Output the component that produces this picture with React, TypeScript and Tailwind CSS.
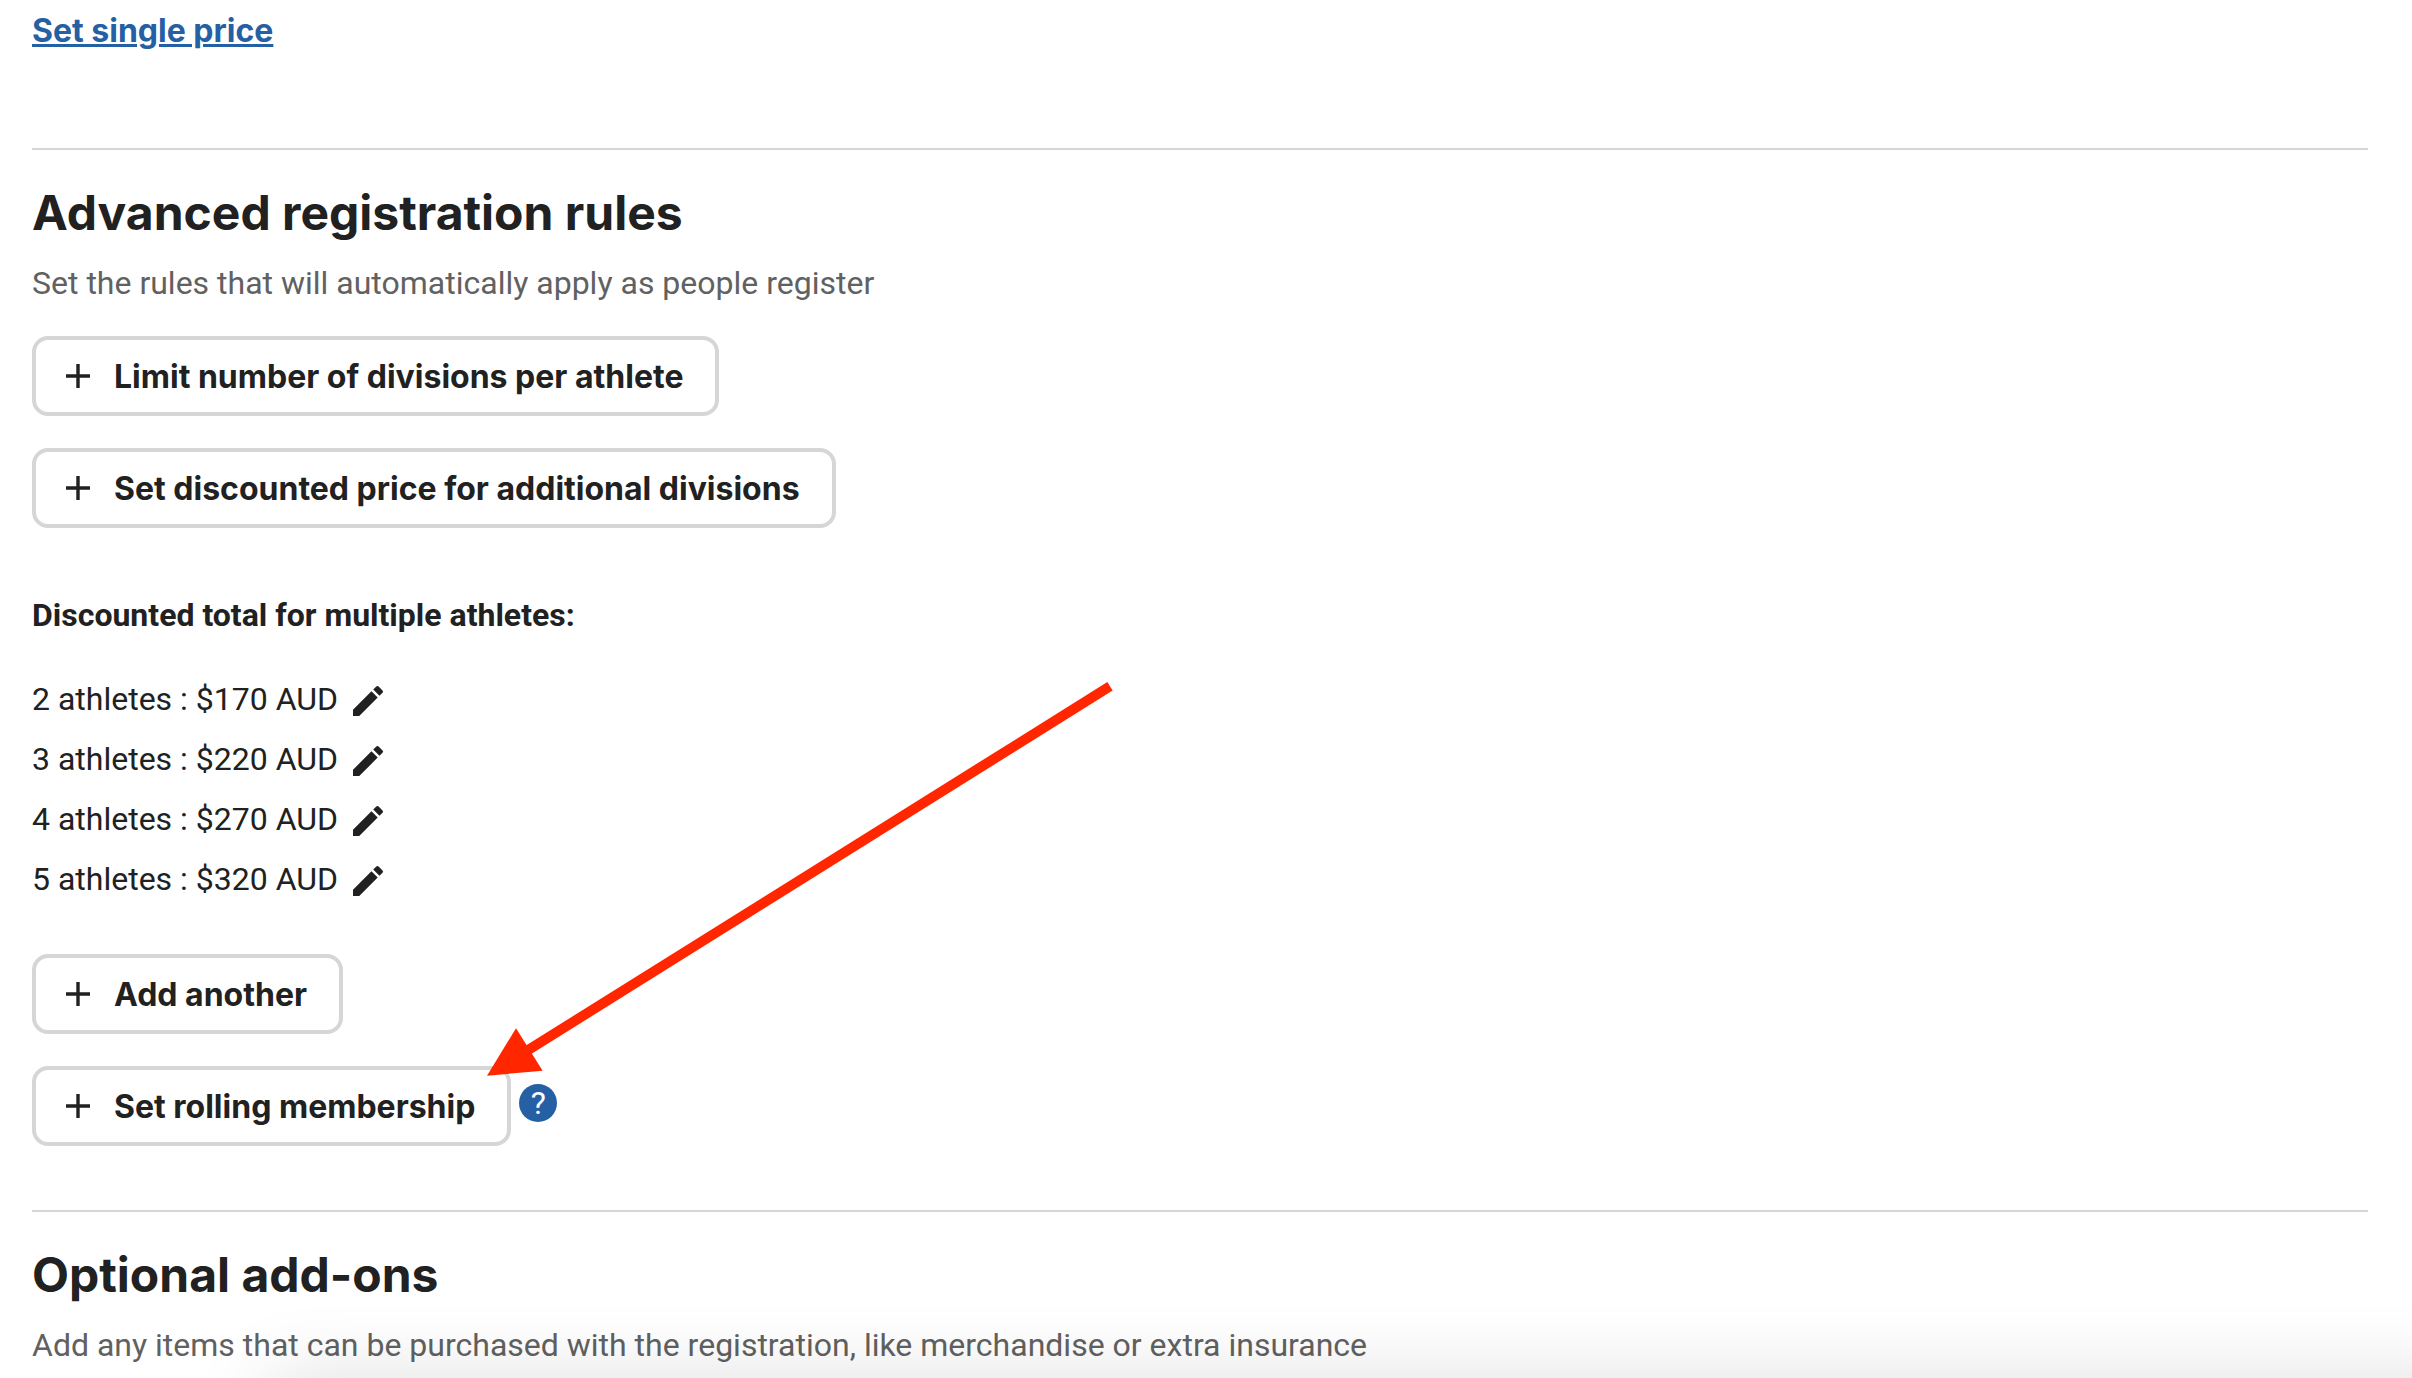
import { MdEdit } from "react-icons/md";

const discounts = [
    { athletes: 2, total: 170 },
    { athletes: 3, total: 220 },
    { athletes: 4, total: 270 },
    { athletes: 5, total: 320 },
];

function PlusButton({ label }: { label: string }) {
    return (
        <button
            type="button"
            className="flex h-20 items-center gap-6 rounded-2xl border-4 border-[#d6d6d6] bg-white pr-8 pl-[30px] font-[Inter,sans-serif] text-[32px] leading-10 font-bold text-[#212121]"
        >
            <svg viewBox="0 0 24 24" className="size-6" fill="none" stroke="currentColor" strokeWidth="3.4" aria-hidden="true">
                <path d="M12 0v24M0 12h24" />
            </svg>
            <span className="pt-0.5">{label}</span>
        </button>
    );
}

function SectionIntro({ title, text }: { title: string; text: string }) {
    return (
        <header className="border-t-2 border-[#d6d6d6] pt-[31px]">
            <h2 className="font-[Inter,sans-serif] text-5xl leading-[64px] font-bold">{title}</h2>
            <p className="mt-4 leading-[44px] text-[#616161]">{text}</p>
        </header>
    );
}

export default function App() {
    return (
        <div className="relative h-screen overflow-hidden bg-white font-[Roboto,sans-serif] text-[32px] leading-10 text-[#212121]">
            <main className="pt-[11px] pr-11 pl-8">
                <a href="#single-price" className="font-[Inter,sans-serif] font-bold text-[#2660a4] underline">
                    Set single price
                </a>

                <section className="mt-[97px]">
                    <SectionIntro
                        title="Advanced registration rules"
                        text="Set the rules that will automatically apply as people register"
                    />

                    <div className="mt-[31px] flex flex-col items-start gap-8">
                        <PlusButton label="Limit number of divisions per athlete" />
                        <PlusButton label="Set discounted price for additional divisions" />
                    </div>

                    <h3 className="mt-[63px] leading-[48px] font-bold">Discounted total for multiple athletes:</h3>
                    <ul className="mt-[30px]">
                        {discounts.map((d) => (
                            <li key={d.athletes} className="flex h-[60px] items-center gap-[10px]">
                                {d.athletes} athletes : ${d.total} AUD
                                <button type="button" aria-label={`Edit price for ${d.athletes} athletes`} className="pt-1">
                                    <MdEdit size={40} />
                                </button>
                            </li>
                        ))}
                    </ul>

                    <div className="mt-[45px] flex flex-col items-start gap-8">
                        <PlusButton label="Add another" />
                        <div className="relative flex items-center gap-2">
                            <PlusButton label="Set rolling membership" />
                            <button
                                type="button"
                                aria-label="About rolling membership"
                                className="mb-1.5 flex size-[38px] items-center justify-center rounded-full bg-[#2660a4] text-[32px] text-white"
                            >
                                ?
                            </button>
                            <svg
                                viewBox="0 0 630 396"
                                className="pointer-events-none absolute bottom-[70px] left-[455px] h-[396px] w-[630px]"
                                aria-hidden="true"
                            >
                                <path d="M623 6.3L38 372" stroke="#ff2600" strokeWidth="10" />
                                <path d="M0 395.7L29 348.3L55.6 390.7Z" fill="#ff2600" />
                            </svg>
                        </div>
                    </div>
                </section>

                <section className="mt-16">
                    <SectionIntro
                        title="Optional add-ons"
                        text="Add any items that can be purchased with the registration, like merchandise or extra insurance"
                    />
                </section>
            </main>
            {/* shadow cast by the bar docked under the page */}
            <div className="pointer-events-none absolute top-full right-[-200px] left-[268px] h-24 shadow-[0_0_80px_rgba(0,0,0,0.13)]" />
        </div>
    );
}
